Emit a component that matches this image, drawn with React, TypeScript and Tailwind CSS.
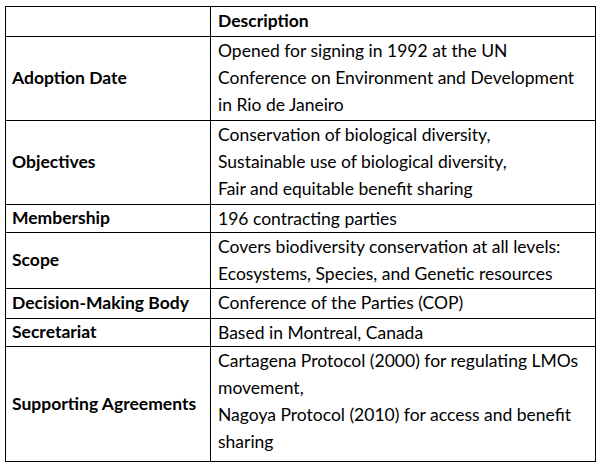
const rows: { label: string; lines: string[]; h: string }[] = [
  {
    label: "Adoption Date",
    lines: [
      "Opened for signing in 1992 at the UN",
      "Conference on Environment and Development",
      "in Rio de Janeiro",
    ],
    h: "h-[84px]",
  },
  {
    label: "Objectives",
    lines: [
      "Conservation of biological diversity,",
      "Sustainable use of biological diversity,",
      "Fair and equitable benefit sharing",
    ],
    h: "h-[84px]",
  },
  { label: "Membership", lines: ["196 contracting parties"], h: "h-[28px]" },
  {
    label: "Scope",
    lines: [
      "Covers biodiversity conservation at all levels:",
      "Ecosystems, Species, and Genetic resources",
    ],
    h: "h-[56px]",
  },
  { label: "Decision-Making Body", lines: ["Conference of the Parties (COP)"], h: "h-[30px]" },
  { label: "Secretariat", lines: ["Based in Montreal, Canada"], h: "h-[28px]" },
  {
    label: "Supporting Agreements",
    lines: [
      "Cartagena Protocol (2000) for regulating LMOs",
      "movement,",
      "Nagoya Protocol (2010) for access and benefit",
      "sharing",
    ],
    h: "h-[115px]",
  },
];

export default function App() {
  return (
    <div className="w-[600px] h-[466px] bg-white pt-[6px] pl-[5px] font-['Lato',sans-serif] text-[17.5px] text-black">
      <table className="w-[591px] border-collapse table-fixed">
        <colgroup>
          <col className="w-[205px]" />
          <col />
        </colgroup>
        <tbody>
          <tr className="h-[30px]">
            <td className="border border-black"></td>
            <td className="border border-black pl-[7px] font-bold leading-[27px] align-top">Description</td>
          </tr>
          {rows.map((row) => (
            <tr key={row.label} className={row.h}>
              <td className="border border-black pl-[6px] font-bold align-middle whitespace-nowrap">{row.label}</td>
              <td className="border border-black pl-[7px] align-top leading-[27px]">
                {row.lines.map((line) => (
                  <div key={line} className="whitespace-nowrap">{line}</div>
                ))}
              </td>
            </tr>
          ))}
        </tbody>
      </table>
    </div>
  );
}
